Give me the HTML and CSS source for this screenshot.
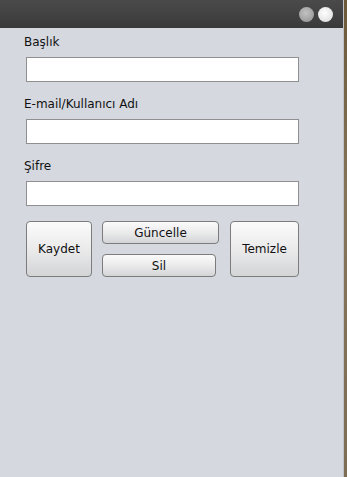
FILE: index.html
```html
<!DOCTYPE html>
<html lang="tr">
<head>
<meta charset="utf-8">
<title>Form</title>
<link rel="stylesheet" href="styles.css">
</head>
<body>
<div class="window">
  <div class="titlebar">
    <span class="dot dot-gray"></span>
    <span class="dot dot-white"></span>
  </div>
  <div class="panel">
    <div class="field">
      <label class="label">Başlık</label>
      <input class="input" type="text">
    </div>
    <div class="field">
      <label class="label">E-mail/Kullanıcı Adı</label>
      <input class="input" type="text">
    </div>
    <div class="field">
      <label class="label">Şifre</label>
      <input class="input" type="password">
    </div>
    <div class="buttons">
      <button class="btn btn-big btn-kaydet">Kaydet</button>
      <div class="stack">
        <button class="btn btn-small btn-guncelle">Güncelle</button>
        <button class="btn btn-small btn-sil">Sil</button>
      </div>
      <button class="btn btn-big btn-temizle">Temizle</button>
    </div>
  </div>
</div>
<div class="strip"></div>
</body>
</html>
```

FILE: styles.css
```css
html, body {
  margin: 0;
  padding: 0;
  height: 100%;
}
body {
  display: flex;
  background: #d5d8df;
  font-family: "DejaVu Sans", Verdana, sans-serif;
  font-size: 12px;
  color: #111;
}
.window {
  flex: 1;
  display: flex;
  flex-direction: column;
}
.titlebar {
  height: 28px;
  background: linear-gradient(#4a4a4a, #3a3a3a);
  display: flex;
  align-items: center;
  justify-content: flex-end;
  gap: 4px;
  padding-right: 10px;
}
.dot {
  width: 15px;
  height: 15px;
  border-radius: 50%;
  margin-top: 1px;
}
.dot-gray {
  background: radial-gradient(circle at 45% 40%, #c2c2c2, #8e8e8e);
}
.dot-white {
  background: radial-gradient(circle at 45% 40%, #ffffff, #d8d8d8);
}
.panel {
  flex: 1;
  background: #d5d8df;
  padding: 7px 0 0 24px;
}
.field {
  display: flex;
  flex-direction: column;
  align-items: flex-start;
  margin-bottom: 15px;
}
.label {
  line-height: 14px;
  height: 14px;
  margin-bottom: 8px;
}
.input {
  box-sizing: border-box;
  margin: 0 0 0 2px;
  width: 273px;
  height: 25px;
  border: 1px solid #8f8f8f;
  background: #fff;
  padding: 0 3px;
  font: inherit;
  outline: none;
}
.buttons {
  display: flex;
  align-items: flex-start;
  margin-left: 2px;
  margin-top: 1px;
}
.btn {
  box-sizing: border-box;
  font: inherit;
  font-size: 12px;
  color: #111;
  border: 1px solid #7c7c7c;
  border-radius: 4px;
  background: linear-gradient(#fbfbfb, #e9e9ea 55%, #d3d4d6);
  padding: 0;
  cursor: pointer;
}
.btn-big {
  height: 56px;
}
.btn-kaydet {
  width: 66px;
}
.btn-temizle {
  width: 69px;
  margin-left: 11px;
}
.stack {
  display: flex;
  flex-direction: column;
  align-items: flex-start;
  margin-left: 10px;
}
.btn-small {
  height: 23px;
  line-height: 20px;
}
.btn-guncelle {
  width: 117px;
}
.btn-sil {
  width: 114px;
  margin-top: 10px;
}
.strip {
  width: 3px;
  background: linear-gradient(#6b5839, #857458 40%, #7d6d55);
  border-left: 1px solid #bfc2c6;
}
```
